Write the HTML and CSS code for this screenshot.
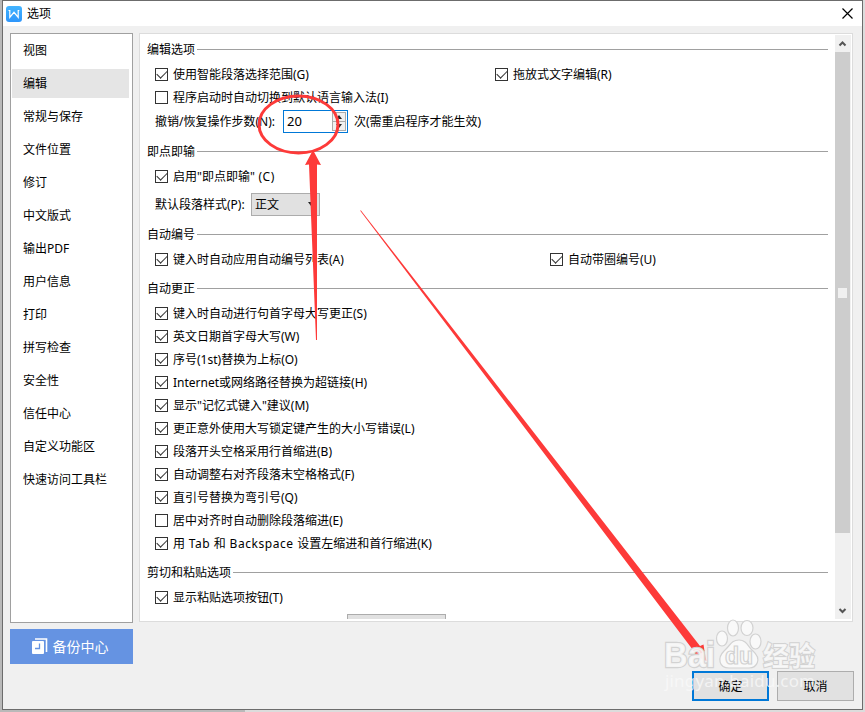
FILE: index.html
```html
<!DOCTYPE html>
<html lang="zh-CN">
<head>
    <meta charset="UTF-8">
    <meta name="viewport" content="width=device-width, initial-scale=1.0">
    <title>选项</title>
    <link rel="stylesheet" href="styles.css">
</head>
<body>
    <div class="window">
        <!-- Title bar -->
        <div class="titlebar">
            <svg class="logo" width="16" height="16" viewBox="0 0 16 16">
                <defs>
                    <linearGradient id="logoFill" x1="0" y1="0" x2="0" y2="1">
                        <stop offset="0" stop-color="#42b4ff"/>
                        <stop offset="1" stop-color="#2e96fb"/>
                    </linearGradient>
                </defs>
                <rect width="16" height="16" rx="3" fill="url(#logoFill)"/>
                <path d="M2.500 4.500H3.800V11.300L8 6.300L12.200 11.300V4.500H13.300" fill="none" stroke="#fff" stroke-width="1.200"/>
            </svg>
            <span class="title">选项</span>
            <svg class="close" width="11" height="11" viewBox="0 0 11 11">
                <path d="M.5 .5L10.5 10.5M10.5 .5L.5 10.5" stroke="#000" stroke-width="1.2"/>
            </svg>
        </div>

        <div class="main">
            <!-- Sidebar -->
            <div class="side">
                <ul class="menu">
                    <li>视图</li>
                    <li class="active">编辑</li>
                    <li>常规与保存</li>
                    <li>文件位置</li>
                    <li>修订</li>
                    <li>中文版式</li>
                    <li>输出PDF</li>
                    <li>用户信息</li>
                    <li>打印</li>
                    <li>拼写检查</li>
                    <li>安全性</li>
                    <li>信任中心</li>
                    <li>自定义功能区</li>
                    <li>快速访问工具栏</li>
                </ul>
                <button class="backup">
                    <svg width="16" height="16" viewBox="0 0 16 16">
                        <path d="M3 1H14.5V14" fill="none" stroke="#fff" stroke-width="1.6"/>
                        <rect x="0" y="3" width="12" height="13" rx="1" fill="#fff"/>
                        <path d="M7.5 5.5V10.5H3" fill="none" stroke="#6593e2" stroke-width="1.3"/>
                    </svg>
                    <span>备份中心</span>
                </button>
            </div>

            <!-- Options panel -->
            <div class="panel">
                <div class="content">
                    <section>
                        <h2>编辑选项</h2>
                        <div class="row two">
                            <label><i class="box on"></i>使用智能段落选择范围(G)</label>
                            <label class="col-r"><i class="box on"></i>拖放式文字编辑(R)</label>
                        </div>
                        <div class="row"><label><i class="box"></i>程序启动时自动切换到默认语言输入法(I)</label></div>
                        <div class="row undo">
                            <span class="undo-label">撤销/恢复操作步数(N):</span>
                            <div class="spin">
                                <span class="num">20</span>
                                <span class="arrows"><b class="up"></b><b class="down"></b></span>
                            </div>
                            <span>次(需重启程序才能生效)</span>
                        </div>
                    </section>

                    <section>
                        <h2>即点即输</h2>
                        <div class="row"><label><i class="box on"></i><span>启用"即点即输"<span class="latin"> (C)</span></span></label></div>
                        <div class="row style-row">
                            <span class="style-label">默认段落样式(P):</span>
                            <div class="combo">正文<b class="down"></b></div>
                        </div>
                    </section>

                    <section class="number">
                        <h2>自动编号</h2>
                        <div class="row two">
                            <label><i class="box on"></i>键入时自动应用自动编号列表(A)</label>
                            <label class="col-u"><i class="box on"></i>自动带圈编号(U)</label>
                        </div>
                    </section>

                    <section>
                        <h2>自动更正</h2>
                        <div class="row"><label><i class="box on"></i>键入时自动进行句首字母大写更正(S)</label></div>
                        <div class="row"><label><i class="box on"></i>英文日期首字母大写(W)</label></div>
                        <div class="row"><label><i class="box on"></i>序号(1st)替换为上标(O)</label></div>
                        <div class="row"><label><i class="box on"></i>Internet或网络路径替换为超链接(H)</label></div>
                        <div class="row"><label><i class="box on"></i>显示"记忆式键入"建议(M)</label></div>
                        <div class="row"><label><i class="box on"></i>更正意外使用大写锁定键产生的大小写错误(L)</label></div>
                        <div class="row"><label><i class="box on"></i>段落开头空格采用行首缩进(B)</label></div>
                        <div class="row"><label><i class="box on"></i>自动调整右对齐段落末空格格式(F)</label></div>
                        <div class="row"><label><i class="box on"></i>直引号替换为弯引号(Q)</label></div>
                        <div class="row"><label><i class="box"></i>居中对齐时自动删除段落缩进(E)</label></div>
                        <div class="row"><label><i class="box on"></i><span>用<span class="latin"> Tab </span>和<span class="latin"> Backspace </span>设置左缩进和首行缩进(K)</span></label></div>
                    </section>

                    <section>
                        <h2>剪切和粘贴选项</h2>
                        <div class="row"><label><i class="box on"></i>显示粘贴选项按钮(T)</label></div>
                        <div class="cut-button"></div>
                    </section>
                </div>

                <div class="scrollbar">
                    <svg class="arrow" width="16" height="17" viewBox="0 0 16 17"><path d="M4.5 10.5L7.5 7.5L10.5 10.5" fill="none" stroke="#555" stroke-width="2"/></svg>
                    <div class="thumb"><i class="grip"></i></div>
                    <svg class="arrow bottom" width="16" height="17" viewBox="0 0 16 17"><path d="M4.5 7L7.5 10L10.5 7" fill="none" stroke="#555" stroke-width="2"/></svg>
                </div>
            </div>
        </div>

        <!-- Dialog buttons -->
        <div class="footer">
            <button class="btn ok">确定</button>
            <button class="btn">取消</button>
        </div>
    </div>

    <!-- Arrows and watermark over the dialog -->
    <svg class="overlay" width="865" height="712" viewBox="0 0 865 712">
        <g fill="#fd3a39">
            <ellipse cx="298.5" cy="124.500" rx="39.5" ry="28.5" fill="none" stroke="#fd3a39" stroke-width="3"/>
            <path d="M313 150L321 165L317 164.500V340H316L309 164.500L305 165Z"/>
            <path d="M360 210.500H361L700 646L703.500 644.500L704.500 651L701 658L691 654L694.500 652Z"/>
            <path d="M704.500 651L706.500 661L700 658L691 654L703 653Z" fill="#ffb9b9"/>
        </g>
        <g class="mark">
            <text x="664" y="667" class="brand" textLength="51" lengthAdjust="spacingAndGlyphs">Bai</text>
            <ellipse cx="722" cy="638.500" rx="5.500" ry="7.500"/>
            <ellipse cx="733" cy="628" rx="5.500" ry="8"/>
            <ellipse cx="747" cy="628" rx="6" ry="7.500"/>
            <ellipse cx="755.500" cy="641.500" rx="5.500" ry="7.500"/>
            <path d="M739 640C747 640 748 647 753 651C762 659 757 668 749 668H729C719 668 717 658 724 651C730 646 731 640 739 640Z"/>
            <text x="725" y="664" class="du">du</text>
            <text x="763" y="666" class="cn" textLength="52" lengthAdjust="spacingAndGlyphs">经验</text>
            <text x="665" y="687" class="url" textLength="150">jingyan.baidu.com</text>
        </g>
    </svg>
</body>
</html>
```

FILE: styles.css
```css
* {
    box-sizing: border-box;
}
body {
    margin: 0;
    width: 865px;
    height: 712px;
    padding: 0 2px 2px;
    overflow: hidden;
    font-family: "Noto Sans", "Noto Sans CJK SC", sans-serif;
    font-size: 12px;
    color: #000;
    background: linear-gradient(90deg, #b9b9b9 245px, #dcdcdc 245px);
}
.window {
    width: 861px;
    height: 710px;
    border: 1px solid #6c6c6c;
    background: #f0f0f0;
}
.titlebar {
    height: 25px;
    padding: 0 9px 0 3px;
    display: flex;
    align-items: center;
    background: #fff;
}
.title {
    flex: 1;
    margin-left: 5px;
    padding-bottom: 2px;
}
.main {
    display: flex;
    gap: 6px;
    padding: 7px 9px 0 7px;
}
.side {
    width: 123px;
}
.menu {
    height: 590px;
    margin: 0;
    padding: 0 3px 0 1px;
    list-style: none;
    border: 1px solid #a0a0a0;
    background: #fff;
}
.menu li {
    height: 29px;
    margin: 2px 0 4px;
    padding-left: 11px;
    line-height: 29px;
}
.menu .active {
    background: #e5e5e5;
}
.backup {
    width: 123px;
    height: 35px;
    margin-top: 6px;
    padding: 0 3px 2px 0;
    border: 0;
    display: flex;
    align-items: center;
    justify-content: center;
    gap: 5px;
    background: #6593e2;
    color: #fff;
    font: 14px "Noto Sans CJK SC", sans-serif;
}
.panel {
    flex: 1;
    height: 589px;
    display: flex;
    border: 1px solid #dcdcdc;
    background: #fff;
    overflow: hidden;
}
.content {
    width: 695px;
    height: 585px;
    padding: 4px 7px 0;
    overflow: hidden;
    white-space: nowrap;
}
section {
    margin-bottom: 6px;
}
.number {
    margin-top: 7px;
}
h2 {
    display: flex;
    align-items: center;
    height: 22px;
    margin: 0 0 3px;
    font-size: 12px;
    font-weight: normal;
}
h2::after {
    content: "";
    flex: 1;
    height: 1px;
    margin-left: 2px;
    background: #a0a0a0;
}
.row {
    display: flex;
    align-items: center;
    height: 23px;
    padding: 0 0 1px 8px;
}
.two {
    display: grid;
    grid-template-columns: 340px 55px 1fr;
}
.two label:first-child {
    grid-column: 1;
}
.col-r {
    grid-column: 2 / 4;
}
.col-u {
    grid-column: 3;
}
label {
    display: flex;
    align-items: center;
}
.box {
    width: 13px;
    height: 13px;
    margin: 1px 5px 0 0;
    border: 1px solid #333;
    background: #fff;
}
.on::after {
    content: "";
    display: block;
    width: 9px;
    height: 5px;
    margin: 1px 0 0 1px;
    border: solid #333;
    border-width: 0 0 1.4px 1.4px;
    transform: rotate(-45deg);
}
.latin {
    letter-spacing: .55px;
}
.undo {
    height: 25px;
}
.undo-label {
    width: 128px;
}
.spin {
    width: 65px;
    height: 23px;
    margin: 1px 6px 0 0;
    padding-left: 3px;
    display: flex;
    align-items: center;
    border: 1px solid #0078d7;
    font-size: 13px;
}
.num {
    flex: 1;
    padding-bottom: 2px;
}
.arrows {
    width: 14px;
    height: 19px;
    margin-right: 1px;
    display: flex;
    flex-direction: column;
    align-items: center;
    justify-content: space-around;
    border: 1px solid #acacac;
    background: linear-gradient(#f0f0f0 8px, #acacac 8px, #acacac 9px, #f0f0f0 9px);
}
.up,
.down {
    border: 3px solid transparent;
    border-top-width: 0;
    border-bottom: 4px solid #222;
}
.down {
    border-top: 4px solid #222;
    border-bottom-width: 0;
}
.style-row {
    height: 24px;
    margin: 5px 0 -1px;
}
.style-label {
    width: 96px;
    padding-bottom: 1px;
}
.combo {
    width: 69px;
    height: 23px;
    padding: 0 5px 2px 3px;
    display: flex;
    align-items: center;
    justify-content: space-between;
    border: 1px solid #acacac;
    background: #e1e1e1;
}
.cut-button {
    width: 99px;
    height: 23px;
    margin: 5px 0 0 200px;
    border: 1px solid #acacac;
    background: #e1e1e1;
}
.scrollbar {
    width: 16px;
    height: 584px;
    margin-top: 1px;
    display: flex;
    flex-direction: column;
    background: #f0f0f0;
}
.thumb {
    width: 15px;
    height: 481px;
    display: flex;
    align-items: center;
    justify-content: center;
    background: #cdcdcd;
}
.grip {
    width: 9px;
    height: 10px;
    background: #f0f0f0;
}
.bottom {
    margin-top: auto;
}
.footer {
    display: flex;
    justify-content: flex-end;
    gap: 8px;
    margin-top: 7px;
    padding-right: 8px;
}
.btn {
    width: 77px;
    height: 30px;
    padding: 0 0 2px;
    border: 1px solid #adadad;
    background: #e1e1e1;
    color: #000;
    font: 12px "Noto Sans CJK SC", sans-serif;
}
.ok {
    border: 2px solid #0078d7;
}
.overlay {
    position: absolute;
    top: 0;
    left: 0;
    pointer-events: none;
}
.mark {
    fill: #fafafa;
    fill-opacity: .85;
    stroke: #d2d2d2;
    stroke-width: 1.2;
}
.brand {
    font: bold 35px "Liberation Sans", sans-serif;
    stroke-width: 2.4;
    paint-order: stroke;
}
.du {
    font: bold 23px "Liberation Sans", sans-serif;
}
.cn {
    font: bold 27px "Noto Sans CJK SC", sans-serif;
    stroke-width: 2;
    paint-order: stroke;
}
.url {
    font: 17px "Noto Sans", sans-serif;
    stroke: none;
    fill-opacity: .75;
}
```
